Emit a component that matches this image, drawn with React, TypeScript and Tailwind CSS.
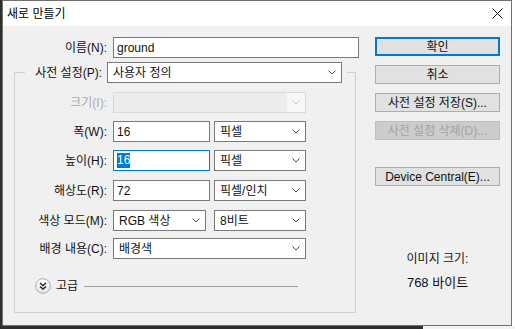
import React from "react";

function Chevron() {
  return (
    <svg width="8" height="5" viewBox="0 0 8 5" className="mr-[5px] shrink-0">
      <polyline points="0.5,0.5 4,4 7.5,0.5" fill="none" stroke="#4a4a4a" strokeWidth="1" />
    </svg>
  );
}

function Select({ text, w, disabled }: { text: string; w: string; disabled?: boolean }) {
  if (disabled) {
    return (
      <div className={`flex h-[21px] items-stretch justify-between border border-[#d9d9d9] bg-[#ececec] ${w}`}>
        <span />
        <div className="flex w-[18px] items-center justify-center bg-[#f7f7f7]">
          <svg width="8" height="5" viewBox="0 0 8 5">
            <polyline points="0.5,0.5 4,4 7.5,0.5" fill="none" stroke="#c4c4c4" strokeWidth="1" />
          </svg>
        </div>
      </div>
    );
  }
  return (
    <div className={`flex h-[21px] items-center justify-between border border-[#7a7a7a] bg-white pl-[5px] ${w}`}>
      <span className="leading-none">{text}</span>
      <Chevron />
    </div>
  );
}

function Input({ text, focused, w }: { text: string; focused?: boolean; w: string }) {
  return (
    <div
      className={
        focused
          ? `flex h-[21px] items-center border border-[#0078d7] bg-white pl-[3px] ${w}`
          : `flex h-[21px] items-center border border-[#7a7a7a] bg-white pl-[3px] ${w}`
      }
    >
      {focused ? (
        <span className="bg-[#0078d7] leading-[15px] text-white">{text}</span>
      ) : (
        <span className="leading-none">{text}</span>
      )}
    </div>
  );
}

function Row({ label, children, disabled, cls }: { label: string; children: React.ReactNode; disabled?: boolean; cls: string }) {
  return (
    <div className={`flex items-center gap-[6px] ${cls}`}>
      <div className={disabled ? "w-[92px] text-right text-[#a8a8a8]" : "w-[92px] text-right"}>{label}</div>
      {children}
    </div>
  );
}

function Btn({ text, kind }: { text: string; kind?: "default" | "disabled" }) {
  if (kind === "default") {
    return (
      <div className="flex h-[19px] w-[125px] items-center justify-center border-2 border-[#0078d7] bg-[#e1e1e1]">{text}</div>
    );
  }
  if (kind === "disabled") {
    return (
      <div className="flex h-[19px] w-[125px] items-center justify-center border border-[#bfbfbf] bg-[#cccccc] text-[#a3a3a3]">
        {text}
      </div>
    );
  }
  return (
    <div className="flex h-[19px] w-[125px] items-center justify-center border border-[#adadad] bg-[#e1e1e1]">{text}</div>
  );
}

export default function App() {
  return (
    <div className="flex h-[329px] w-[515px] flex-col overflow-hidden bg-white font-['Liberation_Sans','Noto_Sans_CJK_KR',sans-serif] text-[12px] text-[#111]">
      <div className="flex h-[326px]">
        <div className="w-[2px] bg-[#2e2e2e]" />
        <div className="flex h-[326px] w-[510px] flex-col border border-[#707070] bg-[#f0f0f0]">
          {/* title bar */}
          <div className="flex h-[25px] items-center justify-between bg-white pl-[4px] pr-[8px]">
            <span className="text-[12px] leading-none text-black">새로 만들기</span>
            <svg width="11" height="11" viewBox="0 0 11 11">
              <line x1="0.5" y1="0.5" x2="10.5" y2="10.5" stroke="#111" strokeWidth="1" />
              <line x1="10.5" y1="0.5" x2="0.5" y2="10.5" stroke="#111" strokeWidth="1" />
            </svg>
          </div>
          {/* body */}
          <div className="flex flex-1">
            {/* left */}
            <div className="flex w-[356px] flex-col">
              <div className="mt-[11px] flex items-center gap-[6px]">
                <div className="w-[104px] text-right">이름(N):</div>
                <Input text="ground" w="w-[246px]" />
              </div>
              <fieldset className="ml-[11px] mt-[4px] w-[342px] border border-[#d0d0d0] p-0">
                <legend className="ml-[10px] w-[322px] p-0">
                  <div className="flex items-center justify-end gap-[5px] pr-[5px]">
                    <span>사전 설정(P):</span>
                    <Select text="사용자 정의" w="w-[235px]" />
                  </div>
                </legend>
                <Row label="크기(I):" disabled cls="mt-[9px]">
                  <Select text="" w="w-[193px]" disabled />
                </Row>
                <Row label="폭(W):" cls="mt-[8px]">
                  <Input text="16" w="w-[97px]" />
                  <div className="-ml-[2px]">
                    <Select text="픽셀" w="w-[92px]" />
                  </div>
                </Row>
                <Row label="높이(H):" cls="mt-[8px]">
                  <Input text="16" focused w="w-[97px]" />
                  <div className="-ml-[2px]">
                    <Select text="픽셀" w="w-[92px]" />
                  </div>
                </Row>
                <Row label="해상도(R):" cls="mt-[9px]">
                  <Input text="72" w="w-[97px]" />
                  <div className="-ml-[2px]">
                    <Select text="픽셀/인치" w="w-[92px]" />
                  </div>
                </Row>
                <Row label="색상 모드(M):" cls="mt-[9px]">
                  <Select text="RGB 색상" w="w-[93px]" />
                  <div className="ml-[2px]">
                    <Select text="8비트" w="w-[92px]" />
                  </div>
                </Row>
                <Row label="배경 내용(C):" cls="mt-[7px]">
                  <Select text="배경색" w="w-[193px]" />
                </Row>
                <div className="mb-[18px] mt-[19px] flex h-[16px] items-center">
                  <svg width="16" height="16" viewBox="0 0 16 16" className="ml-[20px]">
                    <defs>
                      <linearGradient id="g" x1="0" y1="0" x2="0" y2="1">
                        <stop offset="0" stopColor="#ffffff" />
                        <stop offset="1" stopColor="#e4e4e4" />
                      </linearGradient>
                    </defs>
                    <circle cx="8" cy="8" r="7.3" fill="url(#g)" stroke="#a9a9a9" strokeWidth="1" />
                    <polyline points="5,5 8,7.5 11,5" fill="none" stroke="#222" strokeWidth="1.4" />
                    <polyline points="5,8.5 8,11 11,8.5" fill="none" stroke="#222" strokeWidth="1.4" />
                  </svg>
                  <span className="ml-[5px] leading-none">고급</span>
                  <div className="ml-[6px] h-px w-[214px] bg-[#a0a0a0]" />
                </div>
              </fieldset>
            </div>
            {/* right */}
            <div className="ml-[16px] flex w-[125px] flex-col">
              <div className="mt-[11px] flex flex-col gap-[9px]">
                <Btn text="확인" kind="default" />
                <Btn text="취소" />
                <Btn text="사전 설정 저장(S)..." />
                <Btn text="사전 설정 삭제(D)..." kind="disabled" />
              </div>
              <div className="mt-[27px]">
                <Btn text="Device Central(E)..." />
              </div>
              <div className="mt-[65px] text-center leading-[16px]">이미지 크기:</div>
              <div className="mt-[8px] text-center text-[13px] leading-[16px]">768 바이트</div>
            </div>
          </div>
        </div>
        <div className="flex-1 bg-white" />
      </div>
      <div className="flex h-[3px]">
        <div className="w-[423px] bg-[#2e2e2e]" />
        <div className="flex-1 bg-[#f3f3f3]" />
      </div>
    </div>
  );
}
